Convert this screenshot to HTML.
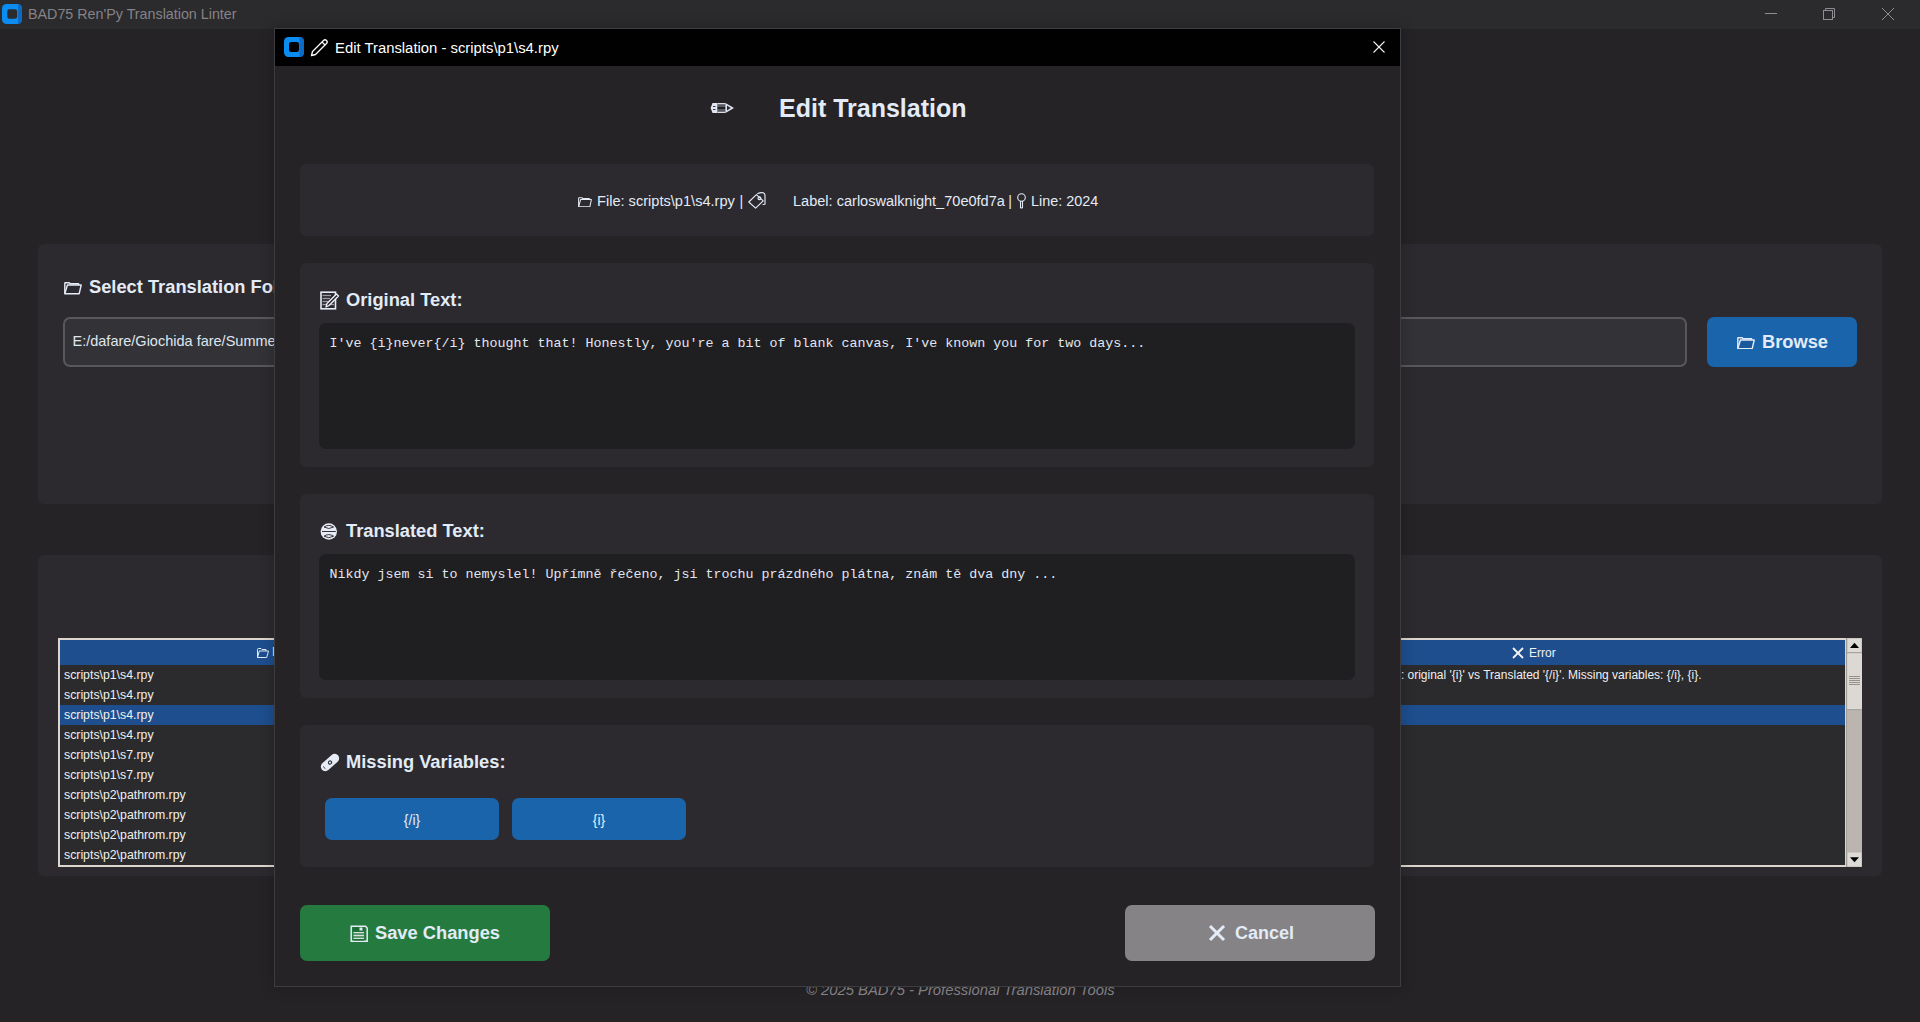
<!DOCTYPE html>
<html><head><meta charset="utf-8">
<style>
*{margin:0;padding:0;box-sizing:border-box}
html,body{width:1920px;height:1022px;overflow:hidden;background:#252326;font-family:"Liberation Sans",sans-serif;color:#e3ebf7}
.abs{position:absolute}
#titlebar{left:0;top:0;width:1920px;height:29px;background:#2b2a2d}
.card{position:absolute;background:#2c2a2e;border-radius:6px}
.txt{position:absolute;white-space:nowrap;line-height:1}
</style></head><body>
<!-- window title bar -->
<div id="titlebar" class="abs">
  <svg class="abs" style="left:2px;top:4px" width="20" height="20" viewBox="0 0 20 20">
    <rect x="0" y="0" width="20" height="20" rx="4.5" fill="#0a8cf0"/>
    <path d="M16 0 h-0.5 a4.5 4.5 0 0 1 4.5 4.5 v11 a4.5 4.5 0 0 1 -4.5 4.5 h0.5z" fill="#0a6ac4"/>
    <rect x="5.3" y="5.3" width="9.8" height="9.4" rx="2.2" fill="#2b2a2d"/>
  </svg>
  <div class="txt" style="left:28px;top:7.3px;font-size:14.3px;color:#858387">BAD75 Ren'Py Translation Linter</div>
  <svg class="abs" style="left:1760px;top:0" width="160" height="29" viewBox="0 0 160 29">
    <g stroke="#8f8d91" stroke-width="1" fill="none">
      <line x1="5" y1="13.5" x2="17" y2="13.5"/>
      <rect x="63.5" y="10.5" width="9" height="9"/>
      <path d="M65.5 10.5 v-2 h9 v9 h-2"/>
      <line x1="122" y1="8" x2="134" y2="20"/>
      <line x1="134" y1="8" x2="122" y2="20"/>
    </g>
  </svg>
</div>

<!-- background card 1 -->
<div class="card" style="left:38px;top:244px;width:1844px;height:260px"></div>
<div class="card" style="left:38px;top:555px;width:1844px;height:321px"></div>


<!-- card 1 content -->
<svg class="abs" style="left:64px;top:282px" width="18" height="12.5" viewBox="0 0 18 12.5" preserveAspectRatio="none">
  <g stroke="#e6ecf6" stroke-width="1.4" stroke-linejoin="round">
    <path d="M0.8 11.7 V1.3 Q0.8 0.8 1.3 0.8 H5.2 L6.2 1.8 H14.6 V3" fill="none"/>
    <path d="M0.8 11.7 L3.4 3 H17.2 L15.2 11.7 Z" fill="#2a2a30"/>
  </g>
</svg>
<div class="txt" style="left:89px;top:277.5px;font-size:18.3px;font-weight:bold">Select Translation Folder</div>
<div class="abs" style="left:63px;top:317px;width:1624px;height:50px;background:#333236;border:2px solid #58575b;border-radius:7px"></div>
<div class="txt" style="left:72.5px;top:333.5px;font-size:14.5px;color:#dfe6f0">E:/dafare/Giochida fare/Summer's Gone/game/tl/czech</div>
<div class="abs" style="left:1707px;top:317px;width:150px;height:50px;background:#1a64ab;border-radius:7px"></div>
<svg class="abs" style="left:1736.5px;top:336.5px" width="18" height="12.5" viewBox="0 0 18 12.5" preserveAspectRatio="none">
  <g stroke="#e6ecf6" stroke-width="1.4" stroke-linejoin="round">
    <path d="M0.8 11.7 V1.3 Q0.8 0.8 1.3 0.8 H5.2 L6.2 1.8 H14.6 V3" fill="none"/>
    <path d="M0.8 11.7 L3.4 3 H17.2 L15.2 11.7 Z" fill="#1a5a9c"/>
  </g>
</svg>
<div class="txt" style="left:1762px;top:332.5px;font-size:18.3px;font-weight:bold">Browse</div>

<!-- table -->
<div class="abs" style="left:58px;top:638px;width:1788px;height:229px;background:#ddd5ce"></div>
<div class="abs" style="left:60px;top:640px;width:1785px;height:225px;background:#2b2a2d;overflow:hidden">
  <div class="abs" style="left:0;top:0;width:1785px;height:25px;background:#1e4e8e"></div>
  <div class="abs" style="left:0;top:65px;width:1785px;height:20px;background:#1e4e8e"></div>
</div>
<div class="txt" style="left:64px;top:669px;font-size:12.3px;color:#f0f0f0">scripts\p1\s4.rpy</div>
<div class="txt" style="left:64px;top:689px;font-size:12.3px;color:#f0f0f0">scripts\p1\s4.rpy</div>
<div class="txt" style="left:64px;top:709px;font-size:12.3px;color:#f0f0f0">scripts\p1\s4.rpy</div>
<div class="txt" style="left:64px;top:729px;font-size:12.3px;color:#f0f0f0">scripts\p1\s4.rpy</div>
<div class="txt" style="left:64px;top:749px;font-size:12.3px;color:#f0f0f0">scripts\p1\s7.rpy</div>
<div class="txt" style="left:64px;top:769px;font-size:12.3px;color:#f0f0f0">scripts\p1\s7.rpy</div>
<div class="txt" style="left:64px;top:789px;font-size:12.3px;color:#f0f0f0">scripts\p2\pathrom.rpy</div>
<div class="txt" style="left:64px;top:809px;font-size:12.3px;color:#f0f0f0">scripts\p2\pathrom.rpy</div>
<div class="txt" style="left:64px;top:829px;font-size:12.3px;color:#f0f0f0">scripts\p2\pathrom.rpy</div>
<div class="txt" style="left:64px;top:849px;font-size:12.3px;color:#f0f0f0">scripts\p2\pathrom.rpy</div>
<div class="txt" style="left:1407.5px;top:669px;font-size:12px;color:#f0f0f0">original '{i}' vs Translated '{/i}'. Missing variables: {/i}, {i}.</div>
<div class="txt" style="left:1401px;top:669px;font-size:12px;color:#f0f0f0">:</div>
<svg class="abs" style="left:1512px;top:647px" width="12" height="12" viewBox="0 0 12 12"><g stroke="#f4f4f4" stroke-width="1.8"><line x1="1" y1="1" x2="11" y2="11"/><line x1="11" y1="1" x2="1" y2="11"/></g></svg>
<div class="txt" style="left:1529px;top:647px;font-size:12px;color:#f0f0f0">Error</div>
<svg class="abs" style="left:257px;top:648px" width="12" height="10" viewBox="0 0 12 10"><g fill="none" stroke="#e3ebf7" stroke-width="1" stroke-linejoin="round"><path d="M0.5 9.5 V1.5 Q0.5 0.5 1.5 0.5 H4 L5 1.5 H9 V3"/><path d="M0.5 9.5 L2.3 3 H11.5 L9.7 9.5 Z"/></g></svg>
<div class="txt" style="left:272px;top:646px;font-size:12.5px;color:#f0f0f0">File</div>
<div class="abs" style="left:1846px;top:638px;width:16px;height:229px;background:#bcb5af;border-left:1px solid #a39d97"></div>
<svg class="abs" style="left:1846px;top:638px" width="16" height="229" viewBox="0 0 16 229">
<rect x="1.5" y="0.5" width="14" height="13.5" fill="#dedad5"/>
<path d="M4 10 L8.5 4.8 L13 10 Z" fill="#000"/>
<rect x="1.5" y="14" width="14" height="1.5" fill="#a8a29c"/>
<rect x="1.8" y="15.8" width="13.6" height="55" fill="#dcd9d4" stroke="#ebe8e4" stroke-width="0.6"/>
<rect x="1.5" y="71" width="14" height="1.2" fill="#a8a29c"/>
<g stroke="#8f8983" stroke-width="0.9"><line x1="3" y1="38.5" x2="14" y2="38.5"/><line x1="3" y1="40.5" x2="14" y2="40.5"/><line x1="3" y1="42.5" x2="14" y2="42.5"/><line x1="3" y1="44.5" x2="14" y2="44.5"/><line x1="3" y1="46.5" x2="14" y2="46.5"/></g>
<rect x="1.5" y="214.5" width="14" height="14" fill="#dedad5"/>
<path d="M4 219.2 L8.5 224.3 L13 219.2 Z" fill="#000"/>
</svg>


<!-- footer behind dialog -->
<div class="txt" style="left:806px;top:983px;font-size:14.8px;font-style:italic;color:#8a888c">© 2025 BAD75 - Professional Translation Tools</div>

<!-- dialog -->
<div class="abs" style="left:274px;top:28px;width:1127px;height:959px;background:#252326;border:1px solid #3d3c40;box-shadow:0 0 12px 2px rgba(0,0,0,0.18)">
</div>
<div class="abs" style="left:275px;top:29px;width:1125px;height:37px;background:#010101"></div>
<svg class="abs" style="left:284px;top:37px" width="20" height="20" viewBox="0 0 20 20">
  <rect x="0" y="0" width="20" height="20" rx="4.5" fill="#0a8cf0"/>
  <path d="M15.5 0 a4.5 4.5 0 0 1 4.5 4.5 v11 a4.5 4.5 0 0 1 -4.5 4.5 z" fill="#0a6ac4"/>
  <rect x="5" y="5" width="10" height="10" rx="2.3" fill="#010101"/>
</svg>
<svg class="abs" style="left:310px;top:38px" width="19" height="19" viewBox="0 0 19 19">
  <g fill="none" stroke="#ffffff" stroke-width="1.3" stroke-linejoin="round">
    <path d="M1.5 17.5 L2.5 13.5 L13.5 2.5 Q15 1 16.5 2.5 Q18 4 16.5 5.5 L5.5 16.5 Z"/>
    <line x1="12" y1="4" x2="15" y2="7"/>
  </g>
</svg>
<div class="txt" style="left:335px;top:40.5px;font-size:14.85px;color:#ffffff">Edit Translation - scripts\p1\s4.rpy</div>
<svg class="abs" style="left:1373px;top:41px" width="12" height="12" viewBox="0 0 12 12"><g stroke="#f2f2f2" stroke-width="1.1"><line x1="0.5" y1="0.5" x2="11.5" y2="11.5"/><line x1="11.5" y1="0.5" x2="0.5" y2="11.5"/></g></svg>

<!-- dialog heading -->
<svg class="abs" style="left:710px;top:102px" width="25" height="12" viewBox="0 0 25 12">
  <path d="M2.5 1 H7.5 V11 H2.5 L0.6 6 Z" fill="#e2e6f2"/>
  <rect x="3" y="4" width="2.5" height="1" fill="#3a3a40"/><rect x="3" y="7" width="2.5" height="1" fill="#3a3a40"/>
  <rect x="7.5" y="1" width="8" height="10" fill="#d8dce6"/>
  <rect x="7.5" y="2.2" width="8" height="7.6" fill="#5a5a62"/>
  <rect x="7.5" y="5.2" width="8" height="1.6" fill="#151518"/>
  <path d="M15.5 1 L24 6 L15.5 11 Z" fill="#e2e6f2"/>
  <path d="M17 3.6 L20.8 6 L17 8.4 Z" fill="#2a2a30"/>
</svg>
<div class="txt" style="left:779px;top:96px;font-size:25px;font-weight:bold">Edit Translation</div>

<!-- info card -->
<div class="card" style="left:300px;top:164px;width:1074px;height:72px"></div>
<svg class="abs" style="left:577.5px;top:196.5px" width="14" height="10.5" viewBox="0 0 18 12.5" preserveAspectRatio="none">
  <g stroke="#e6ecf6" stroke-width="1.3" stroke-linejoin="round">
    <path d="M0.8 11.7 V1.3 Q0.8 0.8 1.3 0.8 H5.2 L6.2 1.8 H14.6 V3" fill="none"/>
    <path d="M0.8 11.7 L3.4 3 H17.2 L15.2 11.7 Z" fill="none"/>
  </g>
</svg>
<div class="txt" style="left:597px;top:194px;font-size:14.6px">File: scripts\p1\s4.rpy</div><div class="txt" style="left:739.5px;top:194px;font-size:14.4px">|</div>
<svg class="abs" style="left:745px;top:190px" width="24" height="22" viewBox="745 190 24 22">
  <g fill="none" stroke="#e3ebf7" stroke-width="1.15" stroke-linejoin="round" stroke-linecap="round">
    <path d="M748.8 202 L756.4 194.6 L763.2 200.9 L755.6 208.2 Z"/>
    <path d="M757.8 193.6 Q760 192.3 763.3 192.7 Q765 193.5 765 195.5 V204.3 L763 204.5"/>
    <circle cx="759.4" cy="198.2" r="1.4"/>
  </g>
</svg>
<div class="txt" style="left:793px;top:194px;font-size:14.55px">Label: carloswalknight_70e0fd7a</div><div class="txt" style="left:1008.3px;top:194px;font-size:14.4px">|</div>
<svg class="abs" style="left:1016px;top:193px" width="11" height="16" viewBox="0 0 11 16">
  <g fill="none" stroke="#e3ebf7" stroke-width="1.1">
    <circle cx="5.5" cy="4.5" r="3.8"/>
    <path d="M4.5 8 V14.5 Q5.5 15.5 6.5 14.5 V8"/>
  </g>
</svg>
<div class="txt" style="left:1031px;top:194px;font-size:14.4px">Line: 2024</div>

<!-- original card -->
<div class="card" style="left:300px;top:263px;width:1074px;height:204px"></div>
<svg class="abs" style="left:320px;top:291px" width="20" height="19" viewBox="0 0 20 19">
  <rect x="1" y="1.2" width="14.5" height="16.6" fill="none" stroke="#e6ecf6" stroke-width="1.6"/>
  <g stroke="#9c9ca4" stroke-width="1.3"><line x1="2.5" y1="4.5" x2="11" y2="4.5"/><line x1="2.5" y1="7.5" x2="10" y2="7.5"/><line x1="2.5" y1="10.5" x2="14" y2="10.5"/><line x1="2.5" y1="13.5" x2="14" y2="13.5"/></g>
  <path d="M6 16 L7 12.5 L16.5 3 L18.5 5 L9 14.5 Z" fill="#2c2b2e" stroke="#eef2fa" stroke-width="1.3" stroke-linejoin="round"/>
</svg>
<div class="txt" style="left:346px;top:290.5px;font-size:18.3px;font-weight:bold">Original Text:</div>
<div class="abs" style="left:319px;top:323px;width:1036px;height:126px;background:#1f1e21;border-radius:7px"></div>
<div class="txt" style="left:329.5px;top:337px;font-family:'Liberation Mono',monospace;font-size:13.333px;color:#e2e7ee">I've {i}never{/i} thought that! Honestly, you're a bit of blank canvas, I've known you for two days...</div>

<!-- translated card -->
<div class="card" style="left:300px;top:494px;width:1074px;height:204px"></div>
<svg class="abs" style="left:320px;top:523px" width="18" height="17" viewBox="0 0 18 17">
  <circle cx="8.8" cy="8.5" r="8.2" fill="#e6ebf5"/>
  <g fill="none" stroke="#35343a" stroke-width="1">
    <line x1="2" y1="8.5" x2="15.8" y2="8.5"/>
    <path d="M4 4 Q8.8 0.8 13.6 4 Q8.8 7 4 4 Z"/>
    <path d="M4 13.2 Q8.8 10 13.6 13.2 Q8.8 16.2 4 13.2 Z"/>
  </g>
</svg>
<div class="txt" style="left:346px;top:521.5px;font-size:18.3px;font-weight:bold">Translated Text:</div>
<div class="abs" style="left:319px;top:554px;width:1036px;height:126px;background:#1f1e21;border-radius:7px"></div>
<div class="txt" style="left:329.5px;top:568px;font-family:'Liberation Mono',monospace;font-size:13.333px;color:#e2e7ee">Nikdy jsem si to nemyslel! Upřímně řečeno, jsi trochu prázdného plátna, znám tě dva dny ...</div>

<!-- missing card -->
<div class="card" style="left:300px;top:725px;width:1074px;height:142px"></div>
<svg class="abs" style="left:320px;top:753px" width="20" height="19" viewBox="0 0 20 19">
  <g transform="rotate(-42 10 9.5)">
    <rect x="-0.8" y="5" width="21.6" height="9" rx="4.5" fill="#e6ebf5"/>
    <circle cx="10" cy="9.5" r="1.6" fill="none" stroke="#2a2a30" stroke-width="1.1"/>
    <path d="M2.5 8 Q1.8 9.5 2.5 11" fill="none" stroke="#3a3a40" stroke-width="0.9"/>
  </g>
</svg>
<div class="txt" style="left:346px;top:753px;font-size:18.3px;font-weight:bold">Missing Variables:</div>
<div class="abs" style="left:325px;top:798px;width:174px;height:42px;background:#1a64ab;border-radius:7px"></div>
<div class="abs" style="left:512px;top:798px;width:174px;height:42px;background:#1a64ab;border-radius:7px"></div>
<div class="txt" style="left:325px;top:813px;width:174px;text-align:center;font-size:14px">{/i}</div>
<div class="txt" style="left:512px;top:813px;width:174px;text-align:center;font-size:14px">{i}</div>

<!-- buttons -->
<div class="abs" style="left:300px;top:905px;width:250px;height:56px;background:#257b3f;border-radius:7px"></div>
<svg class="abs" style="left:350px;top:925px" width="19" height="18" viewBox="0 0 19 18">
  <path d="M1.2 1.2 H15.5 L17.2 3 V16.3 H1.2 Z" fill="none" stroke="#e6ecf6" stroke-width="1.5"/>
  <rect x="3" y="2.2" width="11.5" height="4" fill="#1d6e35"/>
  <rect x="9.5" y="2.5" width="3" height="3" fill="#dfe8f2"/>
  <rect x="3.5" y="7" width="10.5" height="7.5" fill="#5f9a70"/>
  <g stroke="#d4e0de" stroke-width="1"><line x1="3.5" y1="7.5" x2="14" y2="7.5"/><line x1="3.5" y1="10.5" x2="14" y2="10.5"/><line x1="3.5" y1="13.5" x2="14" y2="13.5"/></g>
  <rect x="3.5" y="14" width="10.5" height="1.6" fill="#1d6e35"/>
</svg>
<div class="txt" style="left:375px;top:924px;font-size:18.3px;font-weight:bold">Save Changes</div>
<div class="abs" style="left:1125px;top:905px;width:250px;height:56px;background:#858386;border-radius:7px"></div>
<svg class="abs" style="left:1208px;top:924px" width="18" height="18" viewBox="0 0 18 18"><g stroke="#e3ebf7" stroke-width="3"><line x1="2" y1="2" x2="16" y2="16"/><line x1="16" y1="2" x2="2" y2="16"/></g></svg>
<div class="txt" style="left:1235px;top:924px;font-size:18px;font-weight:bold">Cancel</div>

</body></html>
